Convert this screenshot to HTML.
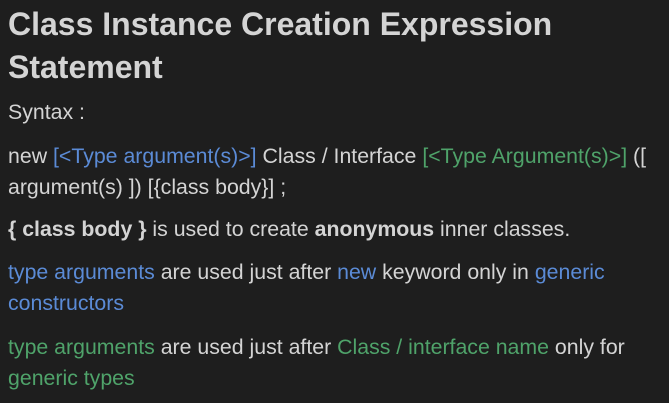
<!DOCTYPE html>
<html><head><style>
html,body{margin:0;background:#1e1e1e;width:669px;height:403px;overflow:hidden}
body{font-family:"Liberation Sans",sans-serif;color:#d4d4d4;padding:0 0 0 8px;box-sizing:border-box}
h1{font-size:32px;line-height:43px;margin:3px 0 0;font-weight:bold;width:600px}
p{font-size:21.3px;line-height:31px;margin:0;width:655px}
.b{color:#5b8bd6}.g{color:#4fa36a}
</style></head><body>
<h1>Class Instance Creation Expression Statement</h1>
<p style="margin-top:8px">Syntax :</p>
<p style="margin-top:13px">new <span class="b">[&lt;Type argument(s)&gt;]</span> Class / Interface <span class="g">[&lt;Type Argument(s)&gt;]</span> ([ argument(s) ]) [{class body}] ;</p>
<p style="margin-top:11px"><b>{ class body }</b> is used to create <b>anonymous</b> inner classes.</p>
<p style="margin-top:12px"><span class="b">type arguments</span> are used just after <span class="b">new</span> keyword only in <span class="b">generic constructors</span></p>
<p style="margin-top:13px"><span class="g">type arguments</span> are used just after <span class="g">Class / interface name</span> only for <span class="g">generic types</span></p>
</body></html>
